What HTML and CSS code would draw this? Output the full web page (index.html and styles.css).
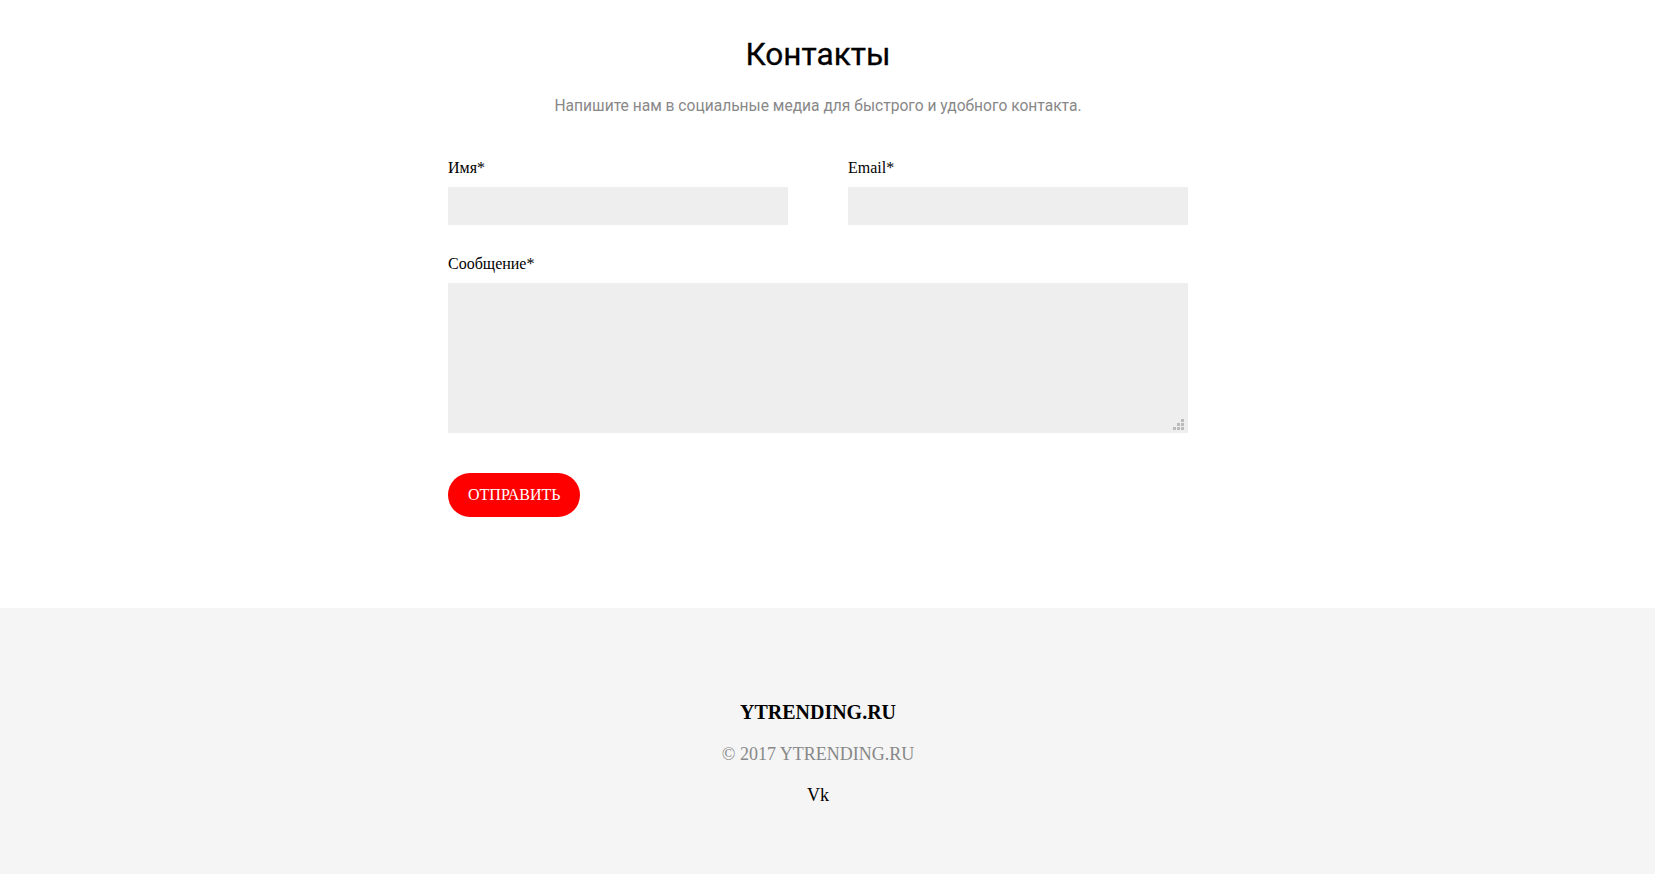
FILE: index.html
```html
<!DOCTYPE html>
<html lang="ru">
<head>
<meta charset="utf-8">
<title>Контакты</title>
<link rel="stylesheet" href="styles.css">
</head>
<body>
<main class="contacts">
  <div class="contacts-inner">
    <h1 class="title">Контакты</h1>
    <p class="subtitle">Напишите нам в социальные медиа для быстрого и удобного контакта.</p>
    <form class="form">
      <div class="row">
        <div class="field">
          <label class="label">Имя*</label>
          <input class="input" type="text">
        </div>
        <div class="field">
          <label class="label">Email*</label>
          <input class="input" type="email">
        </div>
      </div>
      <div class="field field-message">
        <label class="label">Сообщение*</label>
        <div class="textarea-wrap">
          <textarea class="textarea"></textarea>
          <svg class="grip" width="12" height="12" viewBox="0 0 12 12">
            <rect x="8" y="0" width="3" height="3"/>
            <rect x="4" y="4" width="3" height="3"/>
            <rect x="8" y="4" width="3" height="3"/>
            <rect x="0" y="8" width="3" height="3"/>
            <rect x="4" y="8" width="3" height="3"/>
            <rect x="8" y="8" width="3" height="3"/>
          </svg>
        </div>
      </div>
      <button class="submit" type="button">Отправить</button>
    </form>
  </div>
</main>
<footer class="footer">
  <div class="footer-inner">
    <div class="brand">YTRENDING.RU</div>
    <div class="copy">© 2017 YTRENDING.RU</div>
    <div class="social">Vk</div>
  </div>
</footer>
</body>
</html>
```

FILE: styles.css
```css
html, body {
  margin: 0;
  padding: 0;
  background: #fff;
}

body {
  font-family: "Liberation Serif", "Times New Roman", serif;
  color: #000;
}

.contacts {
  padding: 35px 19px 91px 0;
}

.contacts-inner {
  width: 740px;
  margin: 0 auto;
}

.title {
  margin: 0;
  font-family: Roboto, "Noto Sans", sans-serif;
  font-weight: 400;
  font-size: 31.6px;
  line-height: 40px;
  text-align: center;
  color: #000;
  -webkit-text-stroke: 0.3px #000;
}

.subtitle {
  margin: 19px 0 0;
  font-family: Roboto, "Noto Sans", sans-serif;
  font-size: 15.6px;
  line-height: 24px;
  text-align: center;
  color: #888;
}

.form {
  margin-top: 39px;
}

.row {
  display: grid;
  grid-template-columns: 340px 340px;
  column-gap: 60px;
}

.field {
  display: flex;
  flex-direction: column;
}

.label {
  display: block;
  font-size: 16px;
  line-height: 22px;
  margin-bottom: 8px;
}

.input {
  display: block;
  box-sizing: border-box;
  width: 100%;
  height: 38px;
  margin: 0;
  padding: 0 10px;
  border: 0;
  background: #eee;
  outline: none;
  font: inherit;
}

.field-message {
  margin-top: 28px;
}

.field-message .label {
  margin-bottom: 8px;
}

.textarea-wrap {
  position: relative;
  height: 150px;
}

.textarea {
  display: block;
  box-sizing: border-box;
  width: 100%;
  height: 150px;
  margin: 0;
  padding: 10px;
  border: 0;
  background: #eee;
  outline: none;
  resize: none;
  font: inherit;
}

.grip {
  position: absolute;
  right: 3px;
  bottom: 2px;
  fill: #bbb;
}

.submit {
  display: block;
  margin-top: 40px;
  height: 44px;
  padding: 0 20px;
  border: 0;
  border-radius: 22px;
  background: #ff0000;
  color: #fff;
  font-family: "Liberation Serif", "Times New Roman", serif;
  font-size: 16px;
  line-height: 44px;
  text-transform: uppercase;
  cursor: pointer;
}

.footer {
  background: #f5f5f5;
  padding: 92px 19px 90px 0;
}

.footer-inner {
  text-align: center;
}

.brand {
  font-weight: 700;
  font-size: 20px;
  line-height: 24px;
}

.copy {
  margin-top: 18px;
  font-size: 18px;
  line-height: 24px;
  color: #888;
}

.social {
  margin-top: 17px;
  font-size: 18px;
  line-height: 24px;
  color: #000;
}
```
